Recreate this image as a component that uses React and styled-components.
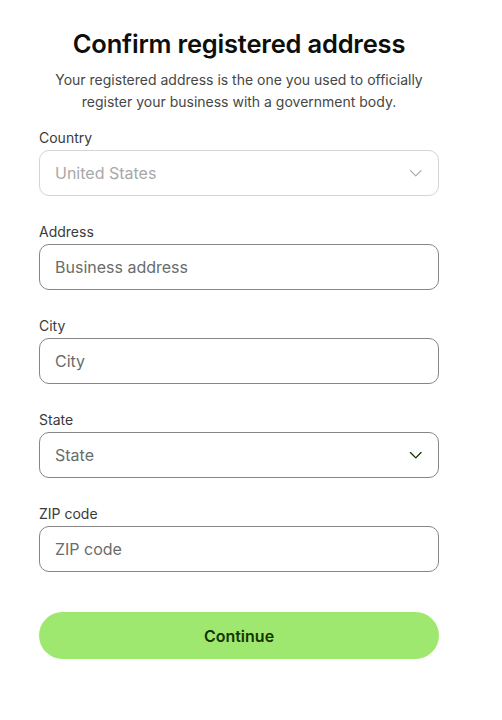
import styled, { createGlobalStyle } from 'styled-components'

// Styles
const GlobalStyle = createGlobalStyle`
    body {
        margin: 0;
        background: #fff;
        font-family: Inter, "Noto Sans", sans-serif;
        color: #0e0f0c;
    }
`
const Page = styled.div`
    width: 400px;
    padding: 26px 0 40px 39px;
    display: flex;
    flex-direction: column;
`
const Title = styled.h1`
    margin: 0;
    font-size: 25.5px;
    font-weight: 600;
    line-height: 36px;
    text-align: center;
    color: #0e0f0c;
    letter-spacing: -0.2px;
`
const Subtitle = styled.p`
    margin: 7px 0 15px;
    font-size: 14px;
    line-height: 22px;
    text-align: center;
    color: #454745;
`
const Fields = styled.div`
    display: flex;
    flex-direction: column;
    gap: 26px;
`
const Field = styled.label`
    display: flex;
    flex-direction: column;
    gap: 2px;
`
const Label = styled.span`
    font-size: 14px;
    line-height: 20px;
    color: #3a3a3a;
`
const Box = styled.div`
    height: 46px;
    box-sizing: border-box;
    border: 1px solid ${p => (p.disabled ? '#d4d4d4' : '#868685')};
    border-radius: 10px;
    display: flex;
    align-items: center;
    justify-content: space-between;
    padding: 0 16px 0 15px;
`
const Input = styled.input`
    border: none;
    outline: none;
    background: transparent;
    font: inherit;
    font-size: 16px;
    color: #0e0f0c;
    width: 100%;
    padding: 0;
    &::placeholder {
        color: ${p => (p.disabled ? '#a8a8a8' : '#6a6c6a')};
    }
`
const Button = styled.button`
    margin-top: 40px;
    height: 47px;
    border: none;
    border-radius: 24px;
    background: #9fe870;
    color: #163300;
    font-family: inherit;
    font-size: 16px;
    font-weight: 600;
    cursor: pointer;
`

const Chevron = ({ disabled }) => (
    <svg width="14" height="14" viewBox="0 0 14 14" fill="none">
        <path
            d="M1.5 4.5 L7 10 L12.5 4.5"
            stroke={disabled ? '#a8a8a8' : '#163300'}
            strokeWidth={disabled ? 1.2 : 1.4}
            strokeLinecap="round"
            strokeLinejoin="round"
        />
    </svg>
)

const fields = [
    { label: 'Country', placeholder: 'United States', select: true, disabled: true },
    { label: 'Address', placeholder: 'Business address' },
    { label: 'City', placeholder: 'City' },
    { label: 'State', placeholder: 'State', select: true },
    { label: 'ZIP code', placeholder: 'ZIP code' },
]

// Components
const App = () => (
    <>
        <GlobalStyle />
        <Page>
            <Title>Confirm registered address</Title>
            <Subtitle>
                Your registered address is the one you used to officially
                <br />
                register your business with a government body.
            </Subtitle>
            <Fields>
                {fields.map(f => (
                    <Field key={f.label}>
                        <Label>{f.label}</Label>
                        <Box disabled={f.disabled}>
                            <Input placeholder={f.placeholder} disabled={f.disabled} readOnly={f.select} />
                            {f.select && <Chevron disabled={f.disabled} />}
                        </Box>
                    </Field>
                ))}
            </Fields>
            <Button>Continue</Button>
        </Page>
    </>
)

export default App
